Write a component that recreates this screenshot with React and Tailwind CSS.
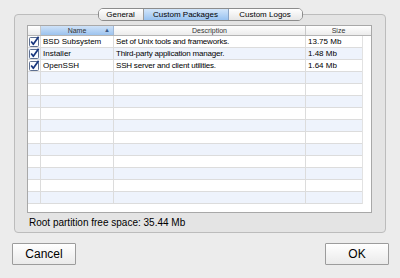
const packages = [
  { name: 'BSD Subsystem', desc: 'Set of Unix tools and frameworks.', size: '13.75 Mb' },
  { name: 'Installer', desc: 'Third-party application manager.', size: '1.48 Mb' },
  { name: 'OpenSSH', desc: 'SSH server and client utilities.', size: '1.64 Mb' },
]

const rows = Array.from({ length: 14 }, (_, i) => packages[i] || null)

function Check() {
  return (
    <svg width="11" height="11" viewBox="0 0 11 11">
      <rect x="0.5" y="1.5" width="9" height="9" rx="1" fill="#fbfcfe" stroke="#5d6f90" />
      <path d="M2.2 5.6 L4.3 8.3 L9.6 0.8" stroke="#16357e" strokeWidth="1.7" fill="none" strokeLinejoin="round" />
    </svg>
  )
}

function Tabs() {
  return (
    <div className="relative z-10 flex justify-center h-[13px]">
      <div className="flex h-[13px] rounded-[5px] border border-[#8c8c8c] overflow-hidden text-[8px] leading-[11px] text-black">
        <div className="w-[45px] text-center bg-gradient-to-b from-white to-[#e6e6e6] border-r border-[#9a9a9a]">General</div>
        <div className="w-[85px] text-center bg-gradient-to-b from-[#d3e6fa] to-[#98c2f0] border-r border-[#8aa4c4]">Custom Packages</div>
        <div className="w-[73px] text-center bg-gradient-to-b from-white to-[#e6e6e6]">Custom Logos</div>
      </div>
    </div>
  )
}

function Table() {
  return (
    <div className="w-[345px] h-[188px] border border-[#a8a8a8] bg-white flex flex-col">
      <div className="flex h-[10px] border-b border-[#b4b4b4] text-[7px] leading-[9px] text-[#333]">
        <div className="w-[13px] border-r border-[#c8c8c8] bg-gradient-to-b from-white to-[#ececec]" />
        <div className="w-[73px] relative text-center border-r border-[#9fb8d8] bg-gradient-to-b from-[#cfe2f8] to-[#9cc3ee]">
          Name
          <span className="absolute right-[3px] top-0 text-[6px] text-[#3c5a86]">▲</span>
        </div>
        <div className="w-[192px] text-center border-r border-[#c8c8c8] bg-gradient-to-b from-white to-[#ececec]">Description</div>
        <div className="flex-1 text-center bg-gradient-to-b from-white to-[#ececec]">Size</div>
      </div>
      <div className="flex">
        <div className="flex flex-col border-r border-[#e2e2e2]">
          {rows.map((r, i) => (
            <div
              key={i}
              className={`flex h-[12px] border-b border-[#dcdcdc] text-[8px] leading-[11px] text-black ${i % 2 ? 'bg-[#eef3fc]' : 'bg-white'}`}
            >
              <div className="w-[13px] border-r border-[#dcdcdc] flex items-center justify-center">
                {r && <Check />}
              </div>
              <div className="w-[73px] pl-[2px] border-r border-[#dcdcdc] whitespace-nowrap">{r && r.name}</div>
              <div className="w-[192px] pl-[2px] border-r border-[#dcdcdc] whitespace-nowrap tracking-[-0.2px]">{r && r.desc}</div>
              <div className="w-[56px] pl-[2px] whitespace-nowrap">{r && r.size}</div>
            </div>
          ))}
        </div>
      </div>
    </div>
  )
}

export default function App() {
  return (
    <div className="w-[400px] h-[278px] bg-[#ececec] pt-2 px-[14px] font-['Liberation_Sans',Arial,sans-serif]">
      <Tabs />
      <div className="-mt-[7px] h-[219px] border border-[#bcbcbc] rounded-[4px] bg-[#e4e4e4] pt-[10px] pl-[12px]">
        <Table />
        <div className="mt-[4px] pl-[2px] text-[10px] leading-[12px] text-black">Root partition free space: 35.44 Mb</div>
      </div>
      <div className="flex justify-between mt-[10px] -ml-[2px] -mr-[3px]">
        <button className="w-[64px] h-[22px] border border-[#9c9c9c] rounded-[1px] bg-gradient-to-b from-white to-[#eaeaea] text-[12px] text-black">Cancel</button>
        <button className="w-[64px] h-[22px] border border-[#9c9c9c] rounded-[1px] bg-gradient-to-b from-white to-[#eaeaea] text-[12px] text-black">OK</button>
      </div>
    </div>
  )
}
